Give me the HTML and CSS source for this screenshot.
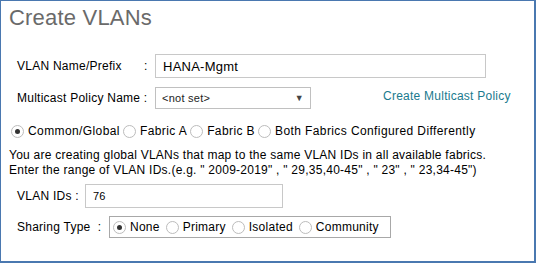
FILE: index.html
```html
<!DOCTYPE html>
<html>
<head>
  <title>Create VLANs</title>
  <link rel="stylesheet" href="styles.css">
</head>
<body>
  <div class="dialog">
    <h1>Create VLANs</h1>

    <div class="row name-row">
      <label class="lbl">VLAN Name/Prefix</label>
      <span class="colon">:</span>
      <input type="text" class="txt name-input" value="HANA-Mgmt">
    </div>

    <div class="row policy-row">
      <label class="lbl">Multicast Policy Name :</label>
      <div class="select">
        <span>&lt;not set&gt;</span>
        <span class="arrow">&#9660;</span>
      </div>
      <a class="link" href="#">Create Multicast Policy</a>
    </div>

    <div class="radios scope">
      <label><span class="radio on"></span>Common/Global</label>
      <label><span class="radio"></span>Fabric A</label>
      <label><span class="radio"></span>Fabric B</label>
      <label><span class="radio"></span>Both Fabrics Configured Differently</label>
    </div>

    <p class="info">You are creating global VLANs that map to the same VLAN IDs in all available fabrics.<br>Enter the range of VLAN IDs.(e.g. " 2009-2019" , " 29,35,40-45" , " 23" , " 23,34-45")</p>

    <div class="row ids-row">
      <label class="lbl">VLAN IDs :</label>
      <input type="text" class="txt ids-input" value="76">
    </div>

    <div class="row share-row">
      <label class="lbl">Sharing Type&nbsp; :</label>
      <div class="radios share">
        <label><span class="radio on"></span>None</label>
        <label><span class="radio"></span>Primary</label>
        <label><span class="radio"></span>Isolated</label>
        <label><span class="radio"></span>Community</label>
      </div>
    </div>
  </div>
</body>
</html>
```

FILE: styles.css
```css
html, body { margin: 0; padding: 0; background: #fff; }
body { font-family: "Liberation Sans", Arial, sans-serif; font-size: 12px; color: #000; letter-spacing: 0.25px; }
.dialog { border: 1px solid #4a78b0; border-width: 1px 2px 2px 1px; width: 533px; height: 260px; overflow: hidden; }
h1 { margin: 0; padding: 4px 0 0 8px; font-size: 22px; font-weight: normal; color: #6a6a6a; line-height: 26px; height: 49px; box-sizing: border-box; letter-spacing: 0.2px; }
.row { display: flex; align-items: center; }
.lbl { padding-left: 16px; }
.name-row { height: 24px; margin-top: 4px; }
.name-row .lbl { width: 127px; }
.colon { width: 11px; }
.txt { font-family: "Liberation Sans", Arial, sans-serif; letter-spacing: 0.25px; border: 1px solid #c8c8c8; height: 24px; box-sizing: border-box; padding: 0 7px; margin: 0; outline: none; }
.name-input { width: 331px; font-size: 13px; }
.policy-row { height: 22px; margin-top: 9px; }
.policy-row .lbl { width: 138px; }
.select { width: 156px; height: 22px; box-sizing: border-box; border: 1px solid #c0c0c0; display: flex; align-items: center; justify-content: space-between; padding: 0 6px 0 6px; font-size: 11px; color: #222; }
.arrow { font-size: 9px; color: #444; }
.link { margin-left: 72px; color: #1a7a8e; text-decoration: none; margin-top: -4px; }
.radios { display: flex; align-items: center; }
.radios label { display: flex; align-items: center; margin-right: 3px; }
.radio { width: 13px; height: 13px; border: 1px solid #bcbcbc; border-radius: 50%; margin-right: 4px; box-sizing: border-box; position: relative; background: #fff; }
.radio.on::after { content: ""; position: absolute; left: 3px; top: 3px; width: 5px; height: 5px; border-radius: 50%; background: #333; }
.scope { padding-left: 10px; margin-top: 15px; height: 14px; }
.scope label { letter-spacing: 0.4px; }
.info { margin: 10px 0 0 8px; line-height: 15px; }
.ids-row { height: 24px; margin-top: 6px; }
.ids-row .lbl { width: 68px; }
.ids-input { width: 198px; font-size: 11px; }
.share-row { margin-top: 8px; }
.share-row .lbl { width: 92px; }
.share { border: 1px solid #a8a8a8; height: 22px; box-sizing: border-box; width: 282px; padding-left: 3px; }
.share label { margin-right: 6px; }
```
